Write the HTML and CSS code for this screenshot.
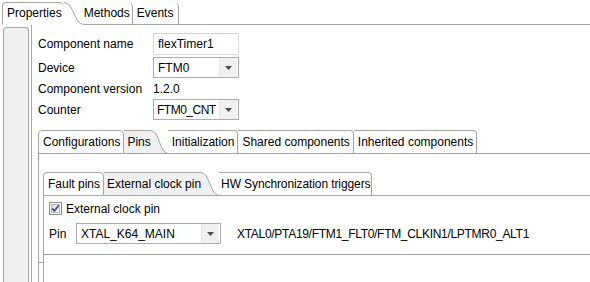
FILE: index.html
```html
<!DOCTYPE html>
<html>
<head>
<meta charset="utf-8">
<link rel="stylesheet" href="styles.css">
</head>
<body>
<div class="app">
  <div class="tabs top">
    <div class="tab sel first"><span>Properties</span></div>
    <svg class="curve c-top" width="20" height="23" viewBox="0 0 20 23"><path d="M0 0.5 C10 0.5 10 22.5 20 22.5" fill="none" stroke="#a5a5a5"/></svg>
    <div class="tab after"><span>Methods</span></div>
    <div class="tab"><span>Events</span></div>
    <div class="fill"></div>
  </div>
  <div class="body">
    <div class="strip"></div>
    <div class="main">
      <div class="form">
        <div class="row row1">
          <div class="lbl">Component name</div>
          <div class="input">flexTimer1</div>
        </div>
        <div class="row">
          <div class="lbl">Device</div>
          <div class="combo small"><span class="val">FTM0</span><span class="btn"><svg width="7" height="4" viewBox="0 0 7 4"><path d="M0 0 H7 L3.5 4 Z" fill="#4d4d4d"/></svg></span></div>
        </div>
        <div class="row">
          <div class="lbl">Component version</div>
          <div class="val">1.2.0</div>
        </div>
        <div class="row">
          <div class="lbl">Counter</div>
          <div class="combo small"><span class="val tight">FTM0_CNT</span><span class="btn"><svg width="7" height="4" viewBox="0 0 7 4"><path d="M0 0 H7 L3.5 4 Z" fill="#4d4d4d"/></svg></span></div>
        </div>
      </div>

      <div class="folder f2">
        <div class="tabs mid">
          <div class="tab first"><span>Configurations</span></div>
          <div class="tab sel"><span>Pins</span></div>
          <svg class="curve" width="17" height="24" viewBox="0 0 17 24"><path d="M0 0.5 C8.5 0.5 8.5 23.5 17 23.5 L0 23.5 Z" fill="#f0f0f0"/><path d="M0 0.5 C8.5 0.5 8.5 23.5 17 23.5" fill="none" stroke="#a5a5a5"/><path d="M0 23.5 H17" stroke="#a5a5a5"/></svg>
          <div class="tab after"><span>Initialization</span></div>
          <div class="tab"><span>Shared components</span></div>
          <div class="tab"><span>Inherited components</span></div>
          <div class="fill"></div>
        </div>
        <div class="folder-body">
          <div class="gutter"><div class="gutter-line"></div></div>
          <div class="folder f3">
            <div class="tabs mid">
              <div class="tab first"><span>Fault pins</span></div>
              <div class="tab sel"><span>External clock pin</span></div>
              <svg class="curve" width="18" height="24" viewBox="0 0 18 24"><path d="M0 0.5 C9 0.5 9 23.5 18 23.5 L0 23.5 Z" fill="#f0f0f0"/><path d="M0 0.5 C9 0.5 9 23.5 18 23.5" fill="none" stroke="#a5a5a5"/><path d="M0 23.5 H18" stroke="#a5a5a5"/></svg>
              <div class="tab after hw"><span>HW Synchronization triggers</span></div>
              <div class="fill"></div>
            </div>
            <div class="page">
              <div class="check-row">
                <svg class="check" width="13" height="13" viewBox="0 0 13 13">
                  <defs><linearGradient id="cg" x1="0" y1="0" x2="1" y2="1"><stop offset="0" stop-color="#dcdcdc"/><stop offset="1" stop-color="#fbfbfb"/></linearGradient></defs>
                  <rect x="0.5" y="0.5" width="12" height="12" fill="#fdfdfd" stroke="#8e8f8f"/>
                  <rect x="2.5" y="2.5" width="8" height="8" fill="url(#cg)" stroke="#b8b8b8"/>
                  <path d="M3.2 6.4 L5.4 8.9 L9.8 3.2" fill="none" stroke="#3c4f91" stroke-width="1.7"/>
                </svg>
                <span>External clock pin</span>
              </div>
              <div class="pin-row">
                <div class="pin-lbl">Pin</div>
                <div class="combo wide"><span class="val">XTAL_K64_MAIN</span><span class="btn"><svg width="7" height="4" viewBox="0 0 7 4"><path d="M0 0 H7 L3.5 4 Z" fill="#4d4d4d"/></svg></span></div>
                <div class="pin-desc">XTAL0/PTA19/FTM1_FLT0/FTM_CLKIN1/LPTMR0_ALT1</div>
              </div>
              <div class="sep"></div>
            </div>
          </div>
        </div>
      </div>
    </div>
  </div>
</div>
</body>
</html>
```
FILE: styles.css
```css
html, body {
  margin: 0;
  padding: 0;
  background: #ffffff;
}
body {
  width: 590px;
  height: 282px;
  overflow: hidden;
  font-family: "Liberation Sans", Arial, sans-serif;
  font-size: 12px;
  color: #000000;
}
.app {
  width: 590px;
  height: 282px;
  display: flex;
  flex-direction: column;
  overflow: hidden;
}

/* generic tab rows */
.tabs {
  display: flex;
  align-items: flex-end;
  flex: none;
}
.tab {
  box-sizing: border-box;
  display: flex;
  align-items: center;
  white-space: nowrap;
  flex: none;
}
.curve {
  display: block;
  flex: none;
}
.fill {
  flex: 1;
  align-self: stretch;
  border-bottom: 1px solid #a5a5a5;
}

/* top tab row */
.tabs.top {
  height: 25px;
}
.tabs.top .tab {
  height: 23px;
  padding: 0 5px 1px 4px;
  border-right: 1px solid #a5a5a5;
  border-bottom: 1px solid #a5a5a5;
  border-top-right-radius: 5px;
}
.tabs.top .tab.sel {
  margin-left: 2px;
  padding: 0 2px 1px 4px;
  border: none;
  border-left: 1px solid #a5a5a5;
  border-top: 1px solid #a5a5a5;
  border-top-left-radius: 4px;
  border-bottom: 1px solid #ffffff;
}
.tabs.top .tab.after {
  padding-left: 0;
  padding-right: 2px;
}

/* body */
.body {
  flex: 1;
  display: flex;
  min-height: 0;
}
.strip {
  flex: none;
  width: 26px;
  box-sizing: border-box;
  margin: 2px 0 0 3px;
  background: #f0f0f0;
  border: 1px solid #a5a5a5;
  border-bottom: none;
  border-radius: 4px 4px 0 0;
}
.main {
  flex: 1;
  margin-left: 2px;
  border-left: 1px solid #a5a5a5;
  padding: 8px 0 0 6px;
  display: flex;
  flex-direction: column;
  min-width: 0;
}

/* form */
.form {
  display: flex;
  flex-direction: column;
}
.row {
  display: flex;
  align-items: center;
  height: 21px;
}
.row1 {
  height: 22px;
  margin-bottom: 2px;
}
.lbl {
  width: 115px;
  flex: none;
  white-space: nowrap;
}
.input {
  box-sizing: border-box;
  width: 86px;
  height: 22px;
  border: 1px solid #dcdcdc;
  border-top-color: #d2d2d2;
  padding: 0 4px;
  display: flex;
  align-items: center;
}
.combo {
  box-sizing: border-box;
  height: 21px;
  border: 1px solid #acacac;
  display: flex;
  align-items: center;
  background: #ffffff;
}
.combo.small {
  width: 86px;
}
.combo.wide {
  width: 145px;
}
.combo .val {
  flex: 1;
  padding-left: 4px;
  white-space: nowrap;
  overflow: hidden;
}
.combo .val.tight {
  padding-left: 3px;
  letter-spacing: -0.5px;
}
.combo .btn {
  flex: none;
  width: 17px;
  height: 19px;
  margin-right: 1px;
  background: #f0f0f0;
  border-left: 1px solid #e6e6e6;
  display: flex;
  align-items: center;
  justify-content: center;
}
.combo .btn svg {
  display: block;
}

/* folders */
.folder {
  display: flex;
  flex-direction: column;
}
.f2 {
  margin-top: 10px;
  flex: 1;
  min-height: 0;
}
.tabs.mid {
  height: 24px;
}
.tabs.mid .tab {
  height: 24px;
  padding: 0 3px 0 4px;
  border-top: 1px solid #a5a5a5;
  border-right: 1px solid #a5a5a5;
  border-bottom: 1px solid #a5a5a5;
  border-top-right-radius: 4px;
  background: #ffffff;
}
.tabs.mid .tab.first {
  border-left: 1px solid #a5a5a5;
  border-top-left-radius: 4px;
}
.tabs.mid .tab.sel {
  border-right: none;
  border-top-right-radius: 0;
  background: #f0f0f0;
  padding: 0 0 0 3px;
}
.tabs.mid .tab.after {
  border-top: 1px solid #a5a5a5;
  padding-left: 4px;
}
.tabs.mid .tab.hw {
  padding-left: 2px;
  padding-right: 1px;
  letter-spacing: -0.1px;
}
.folder-body {
  flex: 1;
  display: flex;
  border-left: 1px solid #a5a5a5;
  min-height: 0;
}
.gutter {
  flex: none;
  width: 5px;
}
.gutter-line {
  box-sizing: border-box;
  height: 109px;
  border-bottom: 1px solid #a5a5a5;
}
.f3 {
  flex: 1;
  padding-top: 18px;
}
.f3 .tabs {
  margin-left: -1px;
}
.page {
  flex: 1;
  border-left: 1px solid #a5a5a5;
  margin-left: -1px;
  padding: 6px 0 0 5px;
  display: flex;
  flex-direction: column;
}
.check-row {
  display: flex;
  align-items: center;
  height: 13px;
}
.check {
  display: block;
  flex: none;
  margin-right: 4px;
}
.pin-row {
  display: flex;
  align-items: center;
  height: 21px;
  margin-top: 8px;
}
.pin-lbl {
  width: 27px;
  flex: none;
}
.pin-desc {
  margin-left: 16px;
  white-space: nowrap;
  letter-spacing: -0.3px;
}
.sep {
  margin-top: 10px;
  margin-left: -5px;
  border-top: 1px solid #a5a5a5;
}
```
